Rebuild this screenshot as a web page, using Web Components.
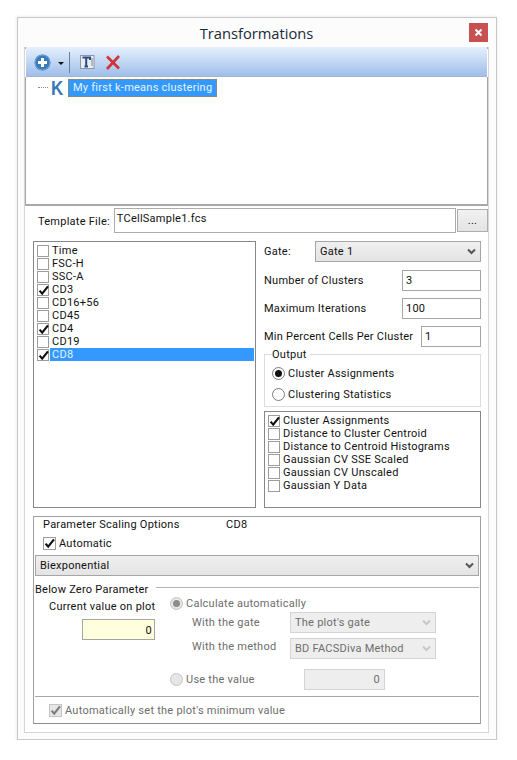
<!DOCTYPE html>
<html>
<head>
<meta charset="utf-8">
<title>Transformations</title>
<style>
  html, body { margin: 0; background: #fff; }
  body { font: 11px/13px Roboto, "Liberation Sans", sans-serif; letter-spacing: .25px; color: #111; padding: 17px 0 0 17px; }
</style>
</head>
<body>
<fc-window title="Transformations">
  <fc-toolbar></fc-toolbar>
  <fc-tree label="My first k-means clustering"></fc-tree>
  <fc-template-row file="TCellSample1.fcs"></fc-template-row>
  <fc-columns>
    <fc-listbox slot="left" class="params" selected="CD8" checked="CD3,CD4,CD8" items="Time,FSC-H,SSC-A,CD3,CD16+56,CD45,CD4,CD19,CD8"></fc-listbox>
    <fc-settings slot="right"></fc-settings>
  </fc-columns>
  <fc-scaling></fc-scaling>
</fc-window>

<script>
const chevron = (color) => `<svg width="9" height="7" viewBox="0 0 9 7"><path d="M1 1.5 L4.5 5 L8 1.5" fill="none" stroke="${color}" stroke-width="2"/></svg>`

const tick = (color) => `<svg width="13" height="13" viewBox="0 0 13 13" style="position:absolute;left:-1px;top:-1px"><path d="M2.6 6.6 L5.2 9.6 L11 2.4" fill="none" stroke="${color}" stroke-width="2.2"/></svg>`

class FcWindow extends HTMLElement {
  constructor() {
    super()
    this.attachShadow({ mode: 'open' })
  }
  connectedCallback() {
    this.shadowRoot.innerHTML = `
      <style>
        :host { display: block; box-sizing: border-box; width: 480px; height: 723px; background: #fcfcfc; border: 1px solid #c9c9c9; box-shadow: 0 0 3px rgba(0,0,0,.12); padding: 0 7px 6px 6px; }
        .title { position: relative; height: 29px; text-align: center; font: 14.7px/31px "Open Sans", sans-serif; letter-spacing: 0; color: #1b2a3a; }
        .close { position: absolute; right: 1px; top: 5px; width: 19px; height: 19px; background: #c75050; display: flex; align-items: center; justify-content: center; }
        .body { box-sizing: border-box; height: 686px; background: #fff; border: 1px solid #d6d6d6; border-top: 0; box-shadow: inset 0 2px 0 #aeaeae; }
      </style>
      <div class="title">${this.getAttribute('title')}
        <div class="close"><svg width="9" height="9" viewBox="0 0 9 9"><path d="M1.5 1.5 L7.5 7.5 M7.5 1.5 L1.5 7.5" stroke="#fff" stroke-width="2"/></svg></div>
      </div>
      <div class="body"><slot></slot></div>`
  }
}

class FcToolbar extends HTMLElement {
  constructor() {
    super()
    this.attachShadow({ mode: 'open' })
    this.shadowRoot.innerHTML = `
      <style>
        :host { display: flex; align-items: center; box-sizing: border-box; height: 30px; padding: 1px 0 0 8px; margin: 0 1px; background: linear-gradient(#e6f0fd, #9fbeea); border-bottom: 1px solid #a3b5cf; }
        .tri { width: 0; height: 0; border: 3px solid transparent; border-top: 3px solid #111; border-bottom: 0; margin: 3px 5px 0 7px; }
        .sep { width: 1px; height: 21px; background: #6d7f96; margin-right: 10px; }
        svg { display: block; }
      </style>
      <svg width="17" height="17" viewBox="0 0 17 17">
        <circle cx="8.5" cy="8.5" r="8" fill="#3a7dbd"/>
        <circle cx="8.5" cy="8.5" r="7.4" fill="none" stroke="#6da2d6" stroke-width="1"/>
        <path d="M8.5 4 V13 M4 8.5 H13" stroke="#fff" stroke-width="3"/>
      </svg>
      <div class="tri"></div>
      <div class="sep"></div>
      <svg width="15" height="14" viewBox="0 0 15 14">
        <rect x=".5" y=".5" width="13.5" height="13" fill="#e8ecf3" stroke="#8d96a4"/>
        <path d="M2.5 2.6 H10 V5 M6.2 2.6 V11.5 M4.5 11.5 H8" fill="none" stroke="#2f4a80" stroke-width="2"/>
        <path d="M12 3 V11" stroke="#7b869a" stroke-width="1"/>
      </svg>
      <svg width="16" height="15" viewBox="0 0 16 15" style="margin-left:10px">
        <path d="M2 1.5 L14 13.5 M14 1 L2 14" stroke="#d2323a" stroke-width="2.6"/>
      </svg>`
  }
}

class FcTree extends HTMLElement {
  constructor() {
    super()
    this.attachShadow({ mode: 'open' })
  }
  connectedCallback() {
    this.shadowRoot.innerHTML = `
      <style>
        :host { display: flex; align-items: flex-start; box-sizing: border-box; height: 129px; padding: 2px 0 0 12px; border-left: 1px solid #a6a6a6; border-right: 1px solid #a6a6a6; border-bottom: 2px solid #a8a8a8; background: #fff; }
        .dots { width: 10px; margin-top: 8px; border-top: 1px dotted #8a8a8a; }
        .k { width: 17px; margin-left: 3px; font: bold 20px/19px "Liberation Sans", sans-serif; letter-spacing: 0; color: #3b78b4; }
        .k span { display: inline-block; transform: scaleX(.85); transform-origin: left; }
        .sel { box-sizing: border-box; height: 18px; padding: 0 4px; line-height: 16px; background: #3399ff; color: #e6f3ff; border: 1px dotted #d07a20; }
      </style>
      <div class="dots"></div><div class="k"><span>K</span></div>
      <div class="sel">${this.getAttribute('label')}</div>`
  }
}

class FcTemplateRow extends HTMLElement {
  constructor() {
    super()
    this.attachShadow({ mode: 'open' })
  }
  connectedCallback() {
    this.shadowRoot.innerHTML = `
      <style>
        :host { display: flex; box-sizing: border-box; height: 35px; padding: 2px 0 0 13px; }
        .label { width: 76px; padding-top: 7px; }
        .file { box-sizing: border-box; width: 343px; height: 25px; border: 1px solid #acacac; padding: 3px 2px; }
        .more { box-sizing: border-box; width: 31px; height: 23px; margin: 1px 0 0 1px; border: 1px solid #adadad; background: linear-gradient(#f1f1f1, #e4e4e4); text-align: center; line-height: 22px; }
      </style>
      <div class="label">Template File:</div>
      <div class="file">${this.getAttribute('file')}</div>
      <div class="more">...</div>`
  }
}

class FcColumns extends HTMLElement {
  constructor() {
    super()
    this.attachShadow({ mode: 'open' })
    this.shadowRoot.innerHTML = `
      <style>
        :host { display: grid; grid-template-columns: 223px 217px; column-gap: 8px; padding-left: 8px; height: 275px; }
        ::slotted([slot=left]) { height: 267px; }
      </style>
      <slot name="left"></slot><slot name="right"></slot>`
  }
}

class FcCheck extends HTMLElement {
  constructor() {
    super()
    this.attachShadow({ mode: 'open' })
  }
  connectedCallback() {
    const on = this.hasAttribute('checked')
    const off = this.hasAttribute('disabled')
    const size = this.hasAttribute('large') ? 13 : 12
    this.shadowRoot.innerHTML = `
      <style>
        :host { display: flex; align-items: center; height: 13px; }
        .box { position: relative; box-sizing: border-box; width: ${size}px; height: ${size}px; flex: none; border: 1px solid ${off ? '#c4c4c4' : '#9d9d9d'}; background: ${off ? '#e6e6e6' : '#fff'}; margin-right: 1px; }
        span { flex: 1; padding-left: 2px; white-space: nowrap; color: ${off ? '#6d6d6d' : 'inherit'}; }
        :host([selected]) span { background: #3399ff; color: #e6f3ff; }
      </style>
      <div class="box">${on ? tick(off ? '#7d7d7d' : '#111') : ''}</div><span><slot></slot></span>`
  }
}

class FcRadio extends HTMLElement {
  constructor() {
    super()
    this.attachShadow({ mode: 'open' })
  }
  connectedCallback() {
    const on = this.hasAttribute('checked')
    const off = this.hasAttribute('disabled')
    this.shadowRoot.innerHTML = `
      <style>
        :host { display: flex; align-items: center; height: 14px; white-space: nowrap; color: ${off ? '#6d6d6d' : 'inherit'}; }
        .r { box-sizing: border-box; width: 13px; height: 13px; border-radius: 50%; flex: none; margin-right: 3px; border: 1px solid ${off ? '#c4c4c4' : '#7d7d7d'}; background: ${off ? '#e6e6e6' : '#fff'}; display: flex; align-items: center; justify-content: center; }
        i { width: 7px; height: 7px; border-radius: 50%; background: ${off ? '#8c8c8c' : '#111'}; }
      </style>
      <div class="r">${on ? '<i></i>' : ''}</div><slot></slot>`
  }
}

class FcSelect extends HTMLElement {
  constructor() {
    super()
    this.attachShadow({ mode: 'open' })
  }
  connectedCallback() {
    const off = this.hasAttribute('disabled')
    this.shadowRoot.innerHTML = `
      <style>
        :host { display: flex; align-items: center; justify-content: space-between; box-sizing: border-box; height: 21px; padding: 0 4px 0 4px; border: 1px solid ${off ? '#d4d4d4' : '#a6a6a6'}; background: ${off ? '#eeeeee' : 'linear-gradient(#f0f0f0, #e4e4e4)'}; color: ${off ? '#6d6d6d' : 'inherit'}; }
      </style>
      <slot></slot>${chevron(off ? '#c8c8c8' : '#555')}`
  }
}

class FcListbox extends HTMLElement {
  constructor() {
    super()
    this.attachShadow({ mode: 'open' })
  }
  connectedCallback() {
    const checked = (this.getAttribute('checked') || '').split(',')
    const selected = this.getAttribute('selected')
    const rows = this.getAttribute('items').split(',').map((t) =>
      `<fc-check ${checked.includes(t) ? 'checked' : ''} ${t === selected ? 'selected' : ''}>${t}</fc-check>`).join('')
    this.shadowRoot.innerHTML = `
      <style>
        :host { display: block; box-sizing: border-box; border: 1px solid #828790; padding: 2px 1px 0 3px; background: #fff; }
      </style>${rows}`
  }
}

class FcSettings extends HTMLElement {
  constructor() {
    super()
    this.attachShadow({ mode: 'open' })
    this.shadowRoot.innerHTML = `
      <style>
        :host { display: flex; flex-direction: column; }
        .row { display: flex; align-items: center; justify-content: space-between; margin-bottom: 7px; height: 21px; }
        .row.first { margin-bottom: 8px; }
        .row.last { margin-bottom: 1px; }
        .gate { width: 166px; }
        .num { box-sizing: border-box; height: 21px; border: 1px solid #a6a6a6; padding: 3px; width: 79px; background: #fff; }
        .small { width: 60px; }
        fieldset { box-sizing: border-box; margin: 0; height: 59px; border: 1px solid #dcdcdc; padding: 0 0 0 7px; display: flex; flex-direction: column; }
        legend { padding: 0 3px 0 0; line-height: 13px; margin-left: 0; }
        fc-radio { margin-top: 5px; }
        fc-radio + fc-radio { margin-top: 7px; }
        fc-listbox { height: 97px; margin-top: 4px; }
      </style>
      <div class="row first"><span>Gate:</span><fc-select class="gate">Gate 1</fc-select></div>
      <div class="row"><span>Number of Clusters</span><div class="num">3</div></div>
      <div class="row"><span>Maximum Iterations</span><div class="num">100</div></div>
      <div class="row last"><span>Min Percent Cells Per Cluster</span><div class="num small">1</div></div>
      <fieldset>
        <legend>Output</legend>
        <fc-radio checked>Cluster Assignments</fc-radio>
        <fc-radio>Clustering Statistics</fc-radio>
      </fieldset>
      <fc-listbox checked="Cluster Assignments" items="Cluster Assignments,Distance to Cluster Centroid,Distance to Centroid Histograms,Gaussian CV SSE Scaled,Gaussian CV Unscaled,Gaussian Y Data"></fc-listbox>`
  }
}

class FcScaling extends HTMLElement {
  constructor() {
    super()
    this.attachShadow({ mode: 'open' })
    this.shadowRoot.innerHTML = `
      <style>
        :host { display: block; box-sizing: border-box; width: 448px; height: 208px; margin-left: 8px; border: 1px solid #a0a0a0; border-bottom-color: #8c8c8c; padding: 1px 1px 0 1px; }
        .head { display: flex; padding-left: 8px; height: 14px; line-height: 14px; }
        .head span:first-child { width: 183px; }
        .auto { padding: 5px 0 0 8px; height: 13px; }
        .biex { margin-top: 5px; height: 21px; }
        .zero { display: flex; align-items: center; margin-top: 6px; height: 14px; }
        .zero div { flex: 1; height: 1px; background: #b4b4b4; margin: -4px 0 0 7px; }
        .main { display: grid; grid-template-columns: 135px 1fr; height: 94px; }
        .plot { padding: 4px 0 0 14px; }
        .current { box-sizing: border-box; width: 73px; height: 21px; margin: 6px 0 0 33px; border: 1px solid #a6a6a6; background: #ffffdd; text-align: right; padding: 4px 2px; }
        .opts { display: flex; flex-direction: column; }
        .line { display: flex; align-items: center; height: 21px; padding-left: 22px; color: #6d6d6d; margin-top: 5px; }
        .line.first { margin-top: 2px; }
        .line span { width: 98px; }
        .line.method span { padding-bottom: 4px; }
        .line fc-select { width: 146px; }
        .use { display: flex; align-items: center; margin-top: 10px; color: #6d6d6d; height: 21px; }
        .use fc-radio { width: 134px; }
        .val { box-sizing: border-box; width: 81px; height: 21px; border: 1px solid #d4d4d4; background: #eeeeee; text-align: right; padding: 3px 4px; }
        .foot { margin-top: 6px; border-top: 1px solid #a8a8a8; padding: 7px 0 0 14px; }
      </style>
      <div class="head"><span>Parameter Scaling Options</span><span>CD8</span></div>
      <div class="auto"><fc-check large checked>Automatic</fc-check></div>
      <fc-select class="biex">Biexponential</fc-select>
      <div class="zero">Below Zero Parameter<div></div></div>
      <div class="main">
        <div class="plot">Current value on plot<div class="current">0</div></div>
        <div class="opts">
          <fc-radio checked disabled>Calculate automatically</fc-radio>
          <div class="line first"><span>With the gate</span><fc-select disabled>The plot's gate</fc-select></div>
          <div class="line method"><span>With the method</span><fc-select disabled>BD FACSDiva Method</fc-select></div>
          <div class="use"><fc-radio disabled>Use the value</fc-radio><div class="val">0</div></div>
        </div>
      </div>
      <div class="foot"><fc-check large checked disabled>Automatically set the plot's minimum value</fc-check></div>`
  }
}

customElements.define('fc-window', FcWindow)
customElements.define('fc-toolbar', FcToolbar)
customElements.define('fc-tree', FcTree)
customElements.define('fc-template-row', FcTemplateRow)
customElements.define('fc-columns', FcColumns)
customElements.define('fc-check', FcCheck)
customElements.define('fc-radio', FcRadio)
customElements.define('fc-select', FcSelect)
customElements.define('fc-listbox', FcListbox)
customElements.define('fc-settings', FcSettings)
customElements.define('fc-scaling', FcScaling)
</script>
</body>
</html>
